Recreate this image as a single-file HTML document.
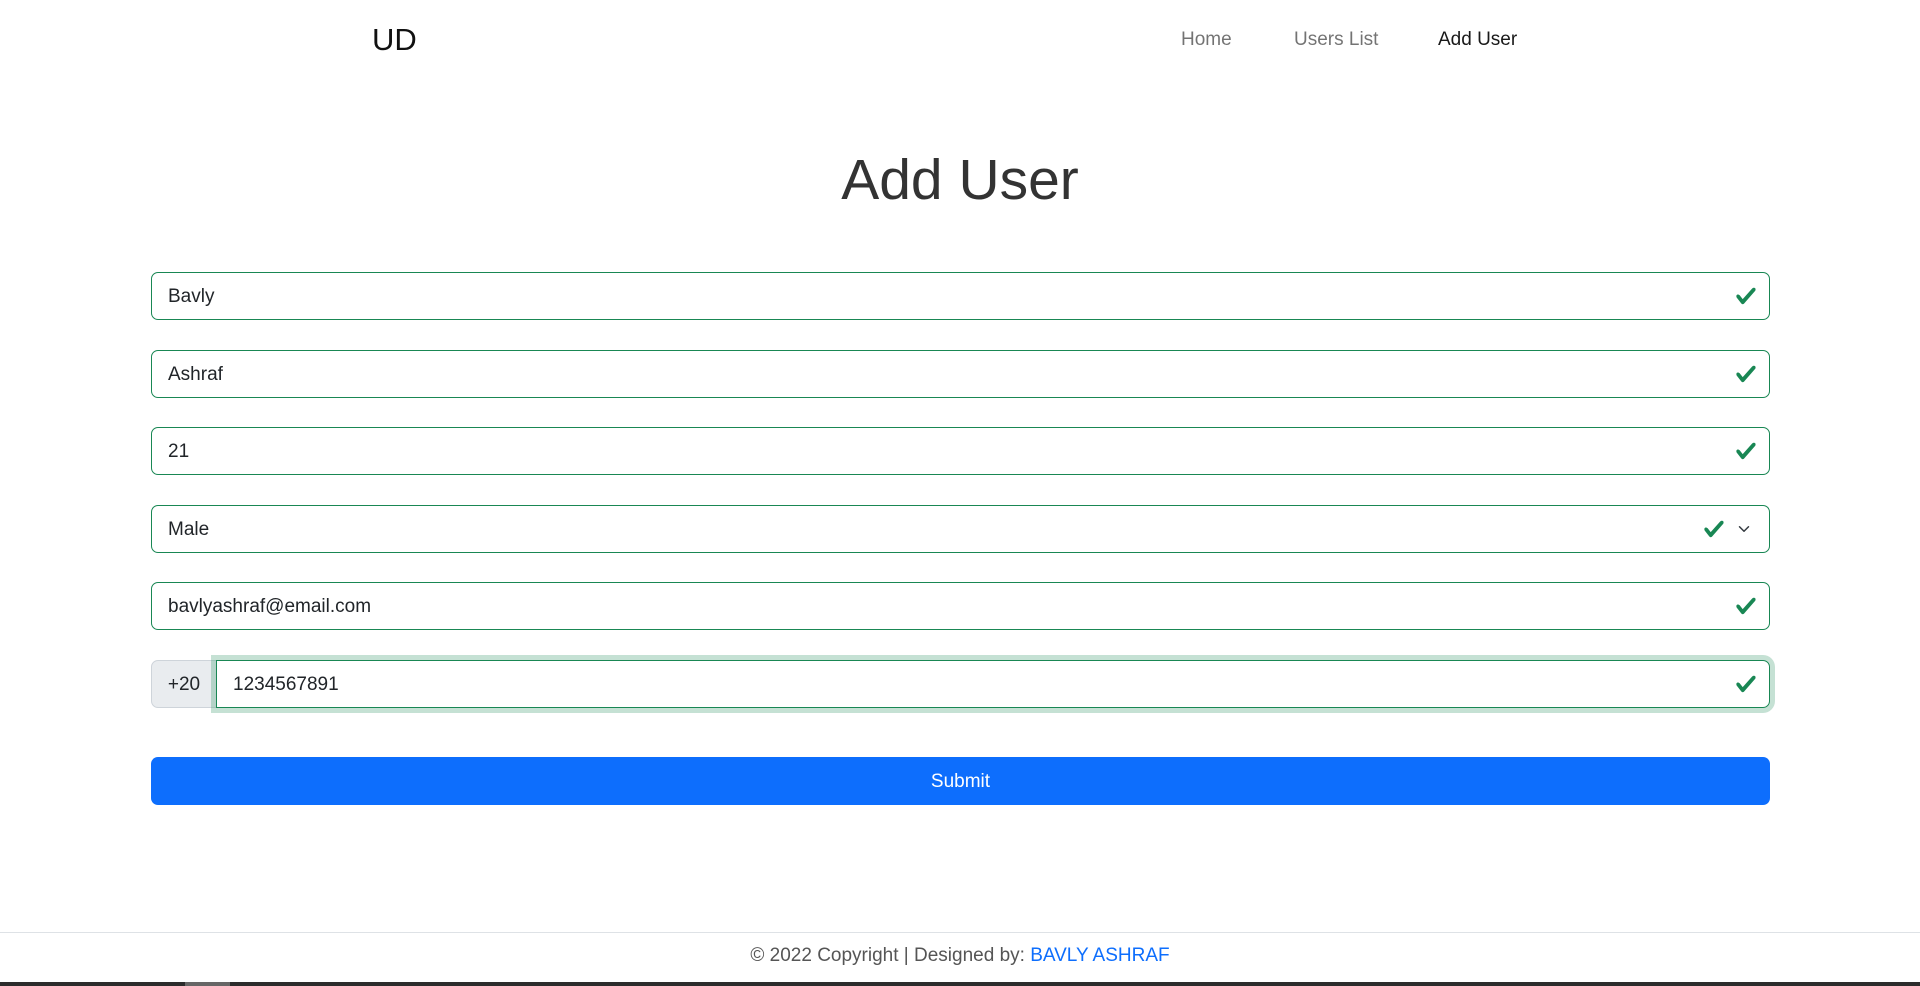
<!DOCTYPE html>
<html><head><meta charset="utf-8"><style>
*{box-sizing:border-box;margin:0;padding:0}
body{width:1920px;height:986px;background:#fff;font-family:"Liberation Sans",sans-serif;position:relative;overflow:hidden;color:#212529}
.a{position:absolute}
.brand{left:372px;top:19px;font-size:31px;color:#111;line-height:42px}
.nav{top:28px;font-size:19px;line-height:24px;color:rgba(0,0,0,.55)}
h1{position:absolute;left:0;width:1920px;text-align:center;top:140px;font-size:57px;font-weight:300;line-height:80px;color:#333}
.in{position:absolute;left:151px;width:1619px;height:48px;border:1.3px solid #198754;border-radius:7px;font-size:19px;line-height:48px;padding-left:16px;color:#212529}
.ck{position:absolute;right:12px;top:12px;width:22px;height:22px}
.btn{left:151px;top:757px;width:1619px;height:48px;background:#0d6efd;border-radius:7px;color:#fff;font-size:19px;line-height:50px;text-align:center}
</style></head><body>
<div class="a brand">UD</div>
<div class="a nav" style="left:1181px">Home</div>
<div class="a nav" style="left:1294px">Users List</div>
<div class="a nav" style="left:1438px;color:rgba(0,0,0,.9)">Add User</div>
<h1>Add User</h1>
<svg width="0" height="0" style="position:absolute"><defs><symbol id="c" viewBox="0 0 8 8"><path fill="#198754" d="M2.3 6.73.6 4.53c-.4-1.040.46-1.4 1.1-.8l1.1 1.4 3.4-3.8c.6-.63 1.6-.27 1.2.7l-4 4.6c-.43.5-.8.4-1.1.1z"/></symbol></defs></svg>
<div class="in" style="top:272px">Bavly<svg class="ck"><use href="#c"/></svg></div>
<div class="in" style="top:350px">Ashraf<svg class="ck"><use href="#c"/></svg></div>
<div class="in" style="top:427px">21<svg class="ck"><use href="#c"/></svg></div>
<div class="in" style="top:505px">Male<svg class="ck" style="right:44px"><use href="#c"/></svg>
<svg style="position:absolute;right:18px;top:17px" width="14" height="12" viewBox="0 0 16 16"><path fill="none" stroke="#343a40" stroke-width="2" stroke-linecap="round" stroke-linejoin="round" d="m2 5 6 6 6-6"/></svg></div>
<div class="in" style="top:582px">bavlyashraf@email.com<svg class="ck"><use href="#c"/></svg></div>
<div class="a" style="left:151px;top:660px;width:66px;height:48px;background:#e9ecef;border:1.3px solid #ced4da;border-radius:7px 0 0 7px;font-size:19px;line-height:48px;text-align:center">+20</div>
<div class="in" style="top:660px;left:216px;width:1554px;border-radius:0 7px 7px 0;box-shadow:0 0 0 5px rgba(25,135,84,.25)">1234567891<svg class="ck"><use href="#c"/></svg></div>
<div class="a btn">Submit</div>
<div class="a" style="left:0;top:932px;width:1920px;height:1px;background:#dee2e6"></div>
<div class="a" style="left:0;top:944px;width:1920px;text-align:center;font-size:19px;line-height:24px;color:#555">© 2022 Copyright | Designed by: <span style="color:#0d6efd">BAVLY ASHRAF</span></div>
<div class="a" style="left:0;top:982px;width:1920px;height:4px;background:#2b2b2b"></div>
<div class="a" style="left:185px;top:982px;width:45px;height:4px;background:#666"></div>
</body></html>
